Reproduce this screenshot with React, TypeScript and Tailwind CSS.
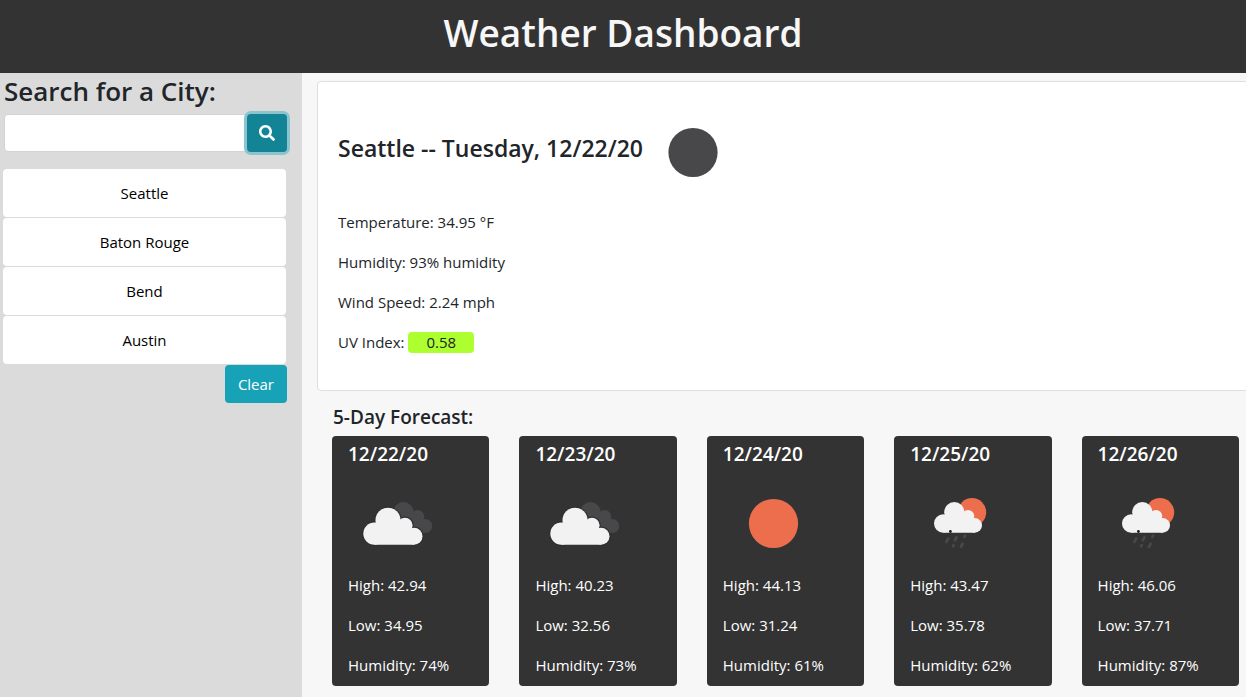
import { FaSearch } from "react-icons/fa";

type Sky = "clouds" | "sun" | "rain";

interface Day {
  date: string;
  sky: Sky;
  high: string;
  low: string;
  humidity: string;
}

const cities = ["Seattle", "Baton Rouge", "Bend", "Austin"];

const days: Day[] = [
  { date: "12/22/20", sky: "clouds", high: "42.94", low: "34.95", humidity: "74%" },
  { date: "12/23/20", sky: "clouds", high: "40.23", low: "32.56", humidity: "73%" },
  { date: "12/24/20", sky: "sun", high: "44.13", low: "31.24", humidity: "61%" },
  { date: "12/25/20", sky: "rain", high: "43.47", low: "35.78", humidity: "62%" },
  { date: "12/26/20", sky: "rain", high: "46.06", low: "37.71", humidity: "87%" },
];

function CloudsIcon() {
  return (
    <svg width="100" height="100" viewBox="0 0 100 100" role="img" aria-label="Broken clouds">
      <g fill="#48484a">
        <circle cx="55.5" cy="39.2" r="10.2" />
        <circle cx="69.7" cy="43.6" r="6.6" />
        <circle cx="77.2" cy="53" r="7.1" />
        <path d="M56 38 L70 42 L78 52 L76 60 L56 60Z" />
      </g>
      <g fill="#f2f2f2" stroke="#2f2f2f" strokeWidth="2.4">
        <circle cx="26.4" cy="60.6" r="11.1" />
        <circle cx="40" cy="47.2" r="12.5" />
        <circle cx="57" cy="52.3" r="7.6" />
        <circle cx="66" cy="63.2" r="8.5" />
      </g>
      <g fill="#f2f2f2">
        <circle cx="26.4" cy="60.6" r="11.1" />
        <circle cx="40" cy="47.2" r="12.5" />
        <circle cx="57" cy="52.3" r="7.6" />
        <circle cx="66" cy="63.2" r="8.5" />
        <path d="M27 50 L40 46 L57 51 L66 60 L66 71.7 L26.4 71.7Z" />
      </g>
    </svg>
  );
}

function RainIcon() {
  return (
    <svg width="100" height="100" viewBox="0 0 100 100" role="img" aria-label="Rain with sun">
      <circle cx="62" cy="39.2" r="14.2" fill="#ec6e4c" />
      <g fill="#f2f2f2">
        <circle cx="33.2" cy="50.5" r="9.2" />
        <circle cx="44.3" cy="39.2" r="10.1" />
        <circle cx="58" cy="43.2" r="6.2" />
        <circle cx="64.7" cy="52.4" r="7.3" />
        <path d="M34 42 L44 38 L58 42 L65 50 L65 59.7 L33.2 59.7Z" />
      </g>
      <circle cx="40.4" cy="58.5" r="1.4" fill="#1c1c1c" />
      <g stroke="#48484a" strokeWidth="2.8" strokeLinecap="round">
        <path d="M38.2 65.6 L36.4 69" />
        <path d="M46.5 64.2 L45 67.2" />
        <path d="M55 62.8 L54.3 64" />
        <path d="M43.6 72.2 L43.1 73.2" />
        <path d="M52.5 70.8 L51 73.8" />
      </g>
    </svg>
  );
}

function SunIcon() {
  return (
    <svg width="100" height="100" viewBox="0 0 100 100" role="img" aria-label="Clear sky">
      <circle cx="50.5" cy="50.5" r="24.6" fill="#ec6e4c" />
    </svg>
  );
}

function NightIcon() {
  return (
    <svg width="100" height="100" viewBox="0 0 100 100" role="img" aria-label="Clear night">
      <circle cx="50" cy="50.5" r="24.6" fill="#48484a" />
    </svg>
  );
}

function SkyIcon({ sky }: { sky: Sky }) {
  if (sky === "clouds") return <CloudsIcon />;
  if (sky === "sun") return <SunIcon />;
  return <RainIcon />;
}

function ForecastCard({ day }: { day: Day }) {
  return (
    <div className="px-[15px]">
      <article className="rounded bg-[#333333] px-4 pt-1 pb-[9px] text-white">
        <h3 className="mb-[5px] text-[19px] leading-7 font-semibold">{day.date}</h3>
        <SkyIcon sky={day.sky} />
        <div className="flex flex-col gap-4">
          <p>High: {day.high}</p>
          <p>Low: {day.low}</p>
          <p>Humidity: {day.humidity}</p>
        </div>
      </article>
    </div>
  );
}

export default function App() {
  return (
    <div className="flex min-h-screen flex-col overflow-hidden bg-[#f7f7f7] font-['Open_Sans','Noto_Sans',sans-serif] text-[15px] leading-6 text-[#212529]">
      <header className="bg-[#333333] pt-2 pb-4">
        <h1 className="text-center text-[37px] leading-[49px] font-semibold text-[#f7f7f7]">Weather Dashboard</h1>
      </header>
      <div className="flex grow">
        <aside className="w-[302px] shrink-0 bg-[#dbdbdb] pr-[15px] pl-[3px]">
          <form onSubmit={(e) => e.preventDefault()}>
            <label htmlFor="city" className="block pb-[5px] pl-px text-[26px] leading-9 font-semibold">
              Search for a City:
            </label>
            <div className="flex pl-px">
              <input
                id="city"
                type="text"
                className="h-[38px] min-w-0 grow rounded-l border border-[#ced4da] bg-white px-3 outline-none"
              />
              <button
                type="submit"
                aria-label="Search"
                className="-ml-px flex h-[38px] w-10 items-center justify-center rounded bg-[#138496] text-white ring-3 ring-[#8bc4ce]"
              >
                <FaSearch size={16} />
              </button>
            </div>
          </form>
          <ul className="mt-[17px] pr-px">
            {cities.map((city) => (
              <li key={city} className="pb-px">
                <button type="button" className="block h-12 w-full rounded bg-white text-center text-black">
                  {city}
                </button>
              </li>
            ))}
          </ul>
          <div className="flex justify-end">
            <button type="button" className="h-[38px] rounded bg-[#17a2b8] px-[13px] text-white">
              Clear
            </button>
          </div>
        </aside>
        <main className="-mr-2 min-w-0 grow pt-2 pl-[15px]">
          <section className="rounded border border-[#dfdfdf] bg-white p-5 pb-9">
            <div className="flex items-center">
              <h2 className="pb-2 text-[23px] leading-7 font-semibold">Seattle -- Tuesday, 12/22/20</h2>
              <NightIcon />
            </div>
            <div className="mt-2 flex flex-col gap-4">
              <p>Temperature: 34.95 °F</p>
              <p>Humidity: 93% humidity</p>
              <p>Wind Speed: 2.24 mph</p>
              <p>
                UV Index: <span className="inline-block rounded bg-[#adff2f] px-[18px] leading-[21px]">0.58</span>
              </p>
            </div>
          </section>
          <section>
            <h2 className="pt-3 pb-[5px] pl-4 text-[19px] leading-7 font-semibold">5-Day Forecast:</h2>
            <div className="grid grid-cols-5">
              {days.map((day) => (
                <ForecastCard key={day.date} day={day} />
              ))}
            </div>
          </section>
        </main>
      </div>
    </div>
  );
}
